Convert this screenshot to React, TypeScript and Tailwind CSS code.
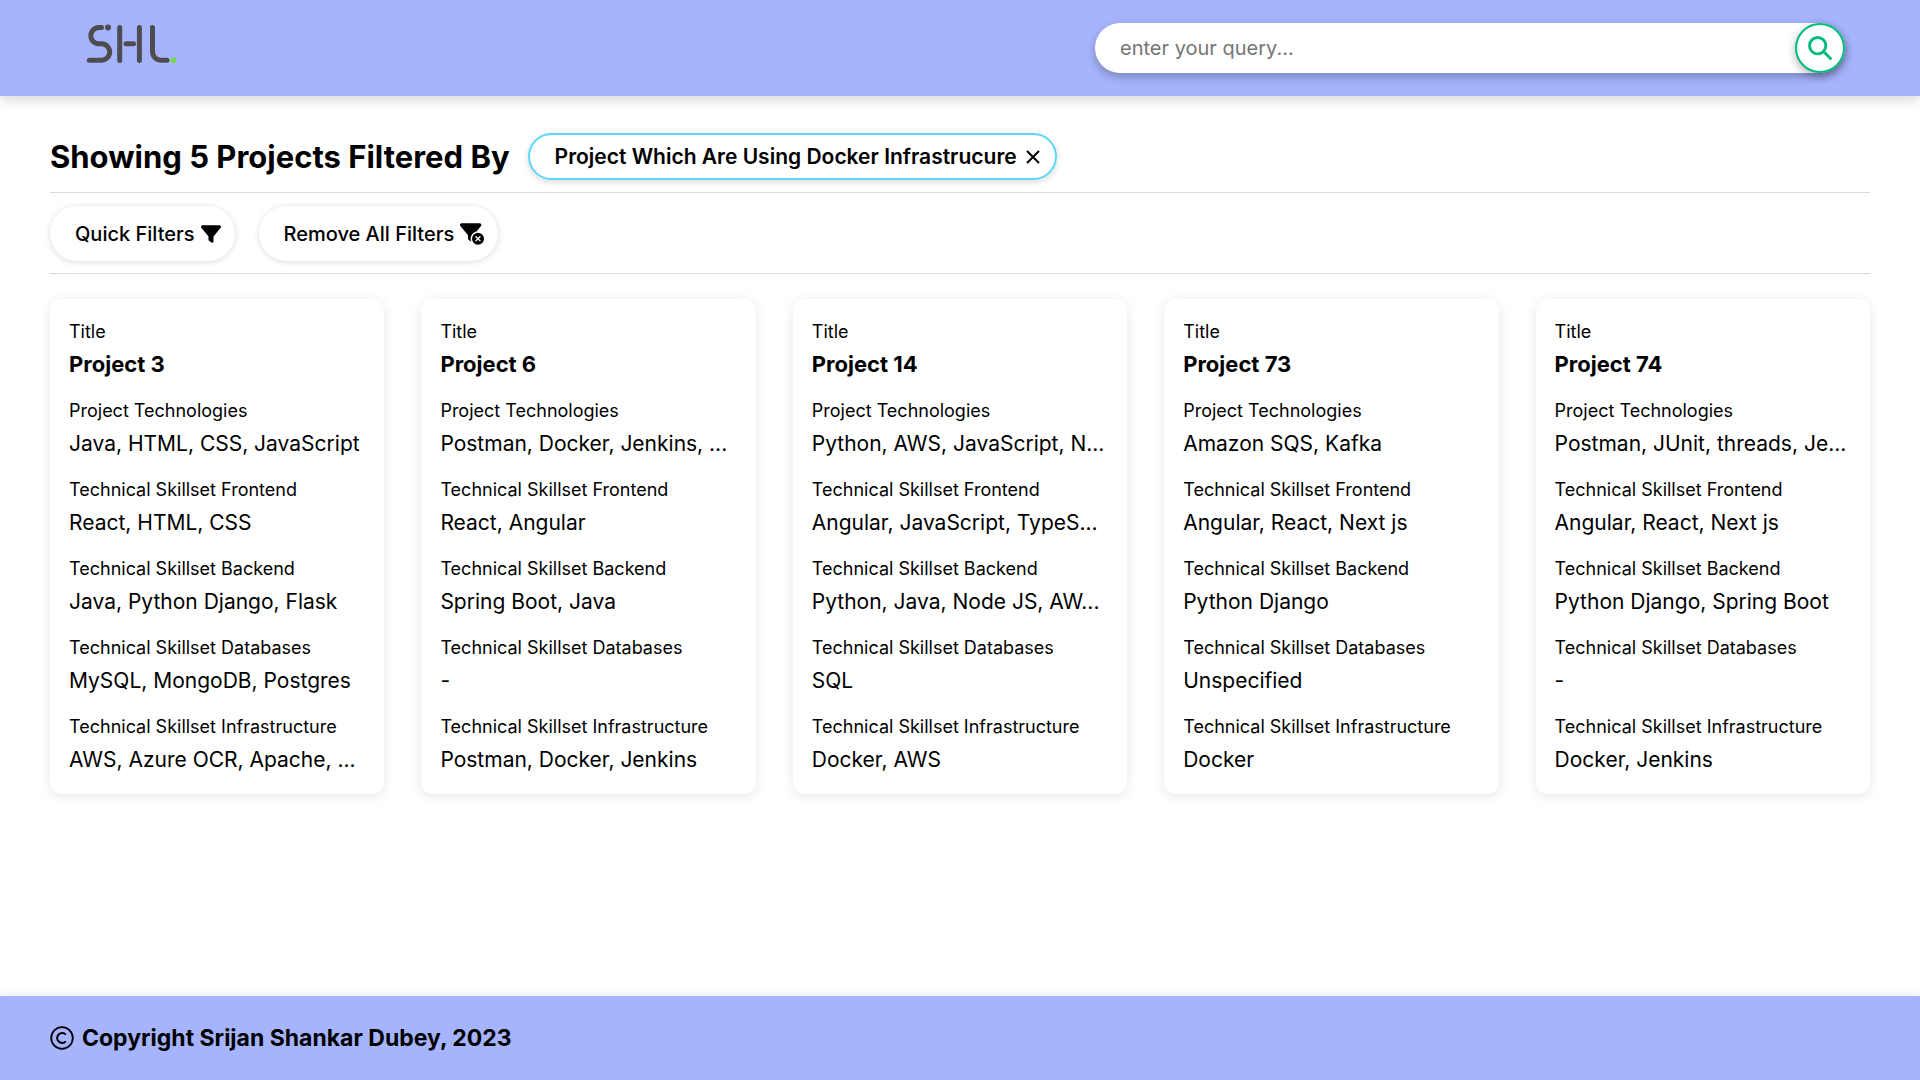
import { FaFilter, FaFilterCircleXmark } from 'react-icons/fa6';
import { HiOutlineSearch } from 'react-icons/hi';

const fieldLabels = [
  'Project Technologies',
  'Technical Skillset Frontend',
  'Technical Skillset Backend',
  'Technical Skillset Databases',
  'Technical Skillset Infrastructure',
];

const projects = [
  {
    title: 'Project 3',
    values: [
      'Java, HTML, CSS, JavaScript',
      'React, HTML, CSS',
      'Java, Python Django, Flask',
      'MySQL, MongoDB, Postgres',
      'AWS, Azure OCR, Apache, ...',
    ],
  },
  {
    title: 'Project 6',
    values: [
      'Postman, Docker, Jenkins, ...',
      'React, Angular',
      'Spring Boot, Java',
      '-',
      'Postman, Docker, Jenkins',
    ],
  },
  {
    title: 'Project 14',
    values: [
      'Python, AWS, JavaScript, N...',
      'Angular, JavaScript, TypeS...',
      'Python, Java, Node JS, AW...',
      'SQL',
      'Docker, AWS',
    ],
  },
  {
    title: 'Project 73',
    values: ['Amazon SQS, Kafka', 'Angular, React, Next js', 'Python Django', 'Unspecified', 'Docker'],
  },
  {
    title: 'Project 74',
    values: [
      'Postman, JUnit, threads, Je...',
      'Angular, React, Next js',
      'Python Django, Spring Boot',
      '-',
      'Docker, Jenkins',
    ],
  },
];

function Logo() {
  return (
    <svg viewBox="86 23 92 42" className="h-[42px] w-[92px]" fill="none" role="img" aria-label="SHL">
      <g stroke="#4d4d50" strokeWidth="5" strokeLinecap="round" strokeLinejoin="round">
        <path d="M101.500 27.500H99a8 8 0 0 0 0 16.300h2.500a8.200 8.200 0 0 1 0 16.400H89.300" />
        <path d="M119.700 27.500V60.500M139.400 27.500V60.500M126 43.800H133.500" />
        <path d="M152.500 27.500V51c0 6 4 9.200 9 9.200H167" />
      </g>
      <circle cx="108" cy="27.500" r="3" fill="#4d4d50" />
      <circle cx="173.500" cy="60.300" r="2.900" fill="#78d64b" />
    </svg>
  );
}

function CloseIcon() {
  return (
    <svg viewBox="0 0 16 16" className="size-4" fill="none" stroke="currentColor" strokeWidth="2" aria-hidden="true">
      <path d="M2 2L14 14M14 2L2 14" />
    </svg>
  );
}

function CopyrightIcon() {
  return (
    <svg viewBox="0 0 24 24" className="size-6" fill="none" stroke="currentColor" aria-hidden="true">
      <circle cx="12" cy="12" r="10.800" strokeWidth="1.800" />
      <path d="M15.800 8.600A5 5 0 1 0 15.800 15.400" strokeWidth="2" />
    </svg>
  );
}

function Header() {
  return (
    <header className="flex h-24 items-center justify-between bg-[#a5b4fc] pr-[75px] pl-[86px] shadow-[0_4px_12px_rgba(0,0,0,0.16)]">
      <a href="#" className="-mt-2">
        <Logo />
      </a>
      <form
        role="search"
        onSubmit={(e) => e.preventDefault()}
        className="flex h-[50px] w-[750px] items-center rounded-full bg-white shadow-[0_4px_10px_rgba(0,0,0,0.25)]"
      >
        <input
          type="text"
          aria-label="Search query"
          placeholder="enter your query..."
          className="h-full min-w-0 flex-1 rounded-full bg-transparent px-[25px] text-xl outline-none placeholder:text-[#757575]"
        />
        <button
          type="submit"
          aria-label="Search"
          className="flex size-[50px] items-center justify-center rounded-full border-2 border-emerald-500 bg-white text-emerald-500 shadow-[0_3px_8px_rgba(0,0,0,0.3)]"
        >
          <HiOutlineSearch className="size-[28px] [&_path]:stroke-[2.5]" />
        </button>
      </form>
    </header>
  );
}

function ProjectCard({ title, values }: { title: string; values: string[] }) {
  return (
    <article className="flex min-w-0 flex-col gap-[13px] rounded-xl bg-white px-[19px] py-[17px] shadow-[0_2px_12px_rgba(0,0,0,0.1)]">
      <div>
        <p className="text-lg leading-[31px]">Title</p>
        <h2 className="truncate text-[22px] leading-[35px] font-bold">{title}</h2>
      </div>
      {values.map((value, i) => (
        <div key={fieldLabels[i]}>
          <p className="truncate text-lg leading-[31px]">{fieldLabels[i]}</p>
          <p className="truncate text-[21px] leading-[35px]">{value}</p>
        </div>
      ))}
    </article>
  );
}

export default function App() {
  return (
    <div className="flex min-h-screen flex-col bg-white font-['Inter',sans-serif] text-black">
      <Header />
      <main className="flex-1 px-[50px] pt-[37px]">
        <div className="flex items-center gap-[18px] border-b border-[#d9d9d9] pb-3">
          <h1 className="text-[31px] leading-[45px] font-bold">Showing 5 Projects Filtered By</h1>
          <div className="flex h-[47px] items-center gap-2 rounded-full border-2 border-[#5cd6fa] pr-3.5 pl-[25px] text-[21px] font-semibold shadow-[0_2px_6px_rgba(0,0,0,0.15)]">
            Project Which Are Using Docker Infrastrucure
            <button type="button" aria-label="Remove filter">
              <CloseIcon />
            </button>
          </div>
        </div>
        <div className="flex items-center gap-6 border-b border-[#d9d9d9] pt-[13px] pb-3">
          <button
            type="button"
            className="flex h-[55px] items-center gap-1.5 rounded-full pr-3.5 pl-[25px] text-xl font-medium shadow-[0_1px_6px_rgba(0,0,0,0.15)]"
          >
            Quick Filters
            <FaFilter className="size-5" />
          </button>
          <button
            type="button"
            className="flex h-[55px] items-center gap-1.5 rounded-full pr-3.5 pl-[25px] text-xl font-medium shadow-[0_1px_6px_rgba(0,0,0,0.15)]"
          >
            Remove All Filters
            <FaFilterCircleXmark className="size-6" />
          </button>
        </div>
        <section className="grid grid-cols-5 gap-[37px] pt-[25px] pb-8">
          {projects.map((project) => (
            <ProjectCard key={project.title} {...project} />
          ))}
        </section>
      </main>
      <footer className="flex h-[84px] items-center gap-2 bg-[#a5b4fc] px-[50px] shadow-[0_-2px_10px_rgba(0,0,0,0.08)]">
        <CopyrightIcon />
        <p className="text-[23px] font-bold">Copyright Srijan Shankar Dubey, 2023</p>
      </footer>
    </div>
  );
}
